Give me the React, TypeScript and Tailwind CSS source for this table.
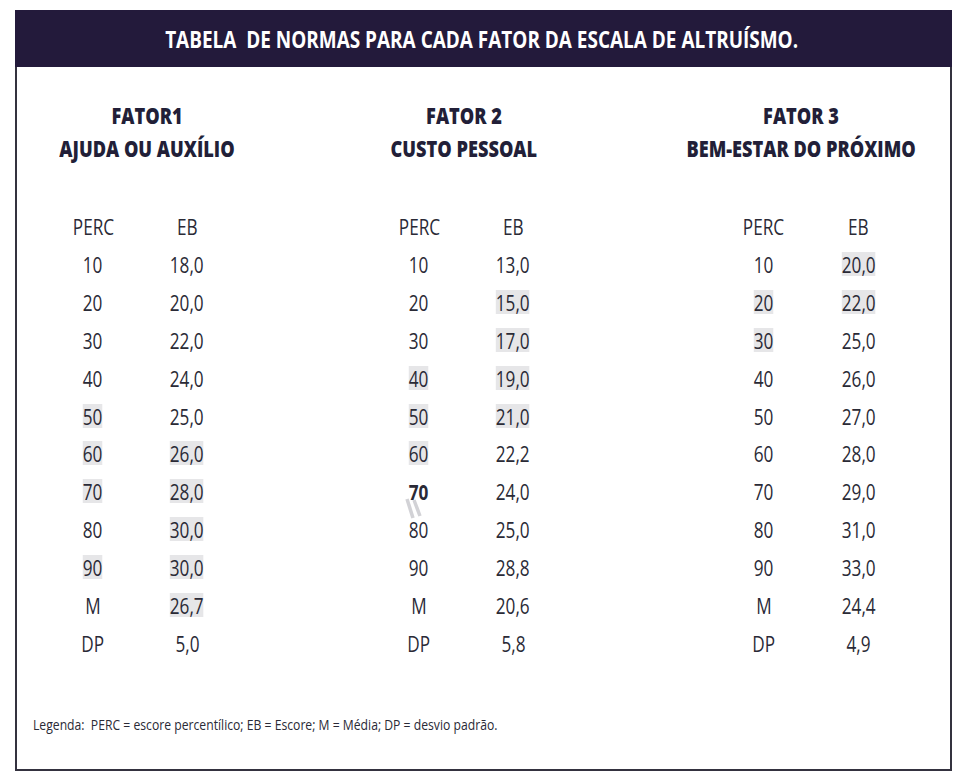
import React from "react";

type Row = { p: string; e: string; hp?: boolean; he?: boolean; bold?: boolean };

const fator1: Row[] = [
  { p: "10", e: "18,0" },
  { p: "20", e: "20,0" },
  { p: "30", e: "22,0" },
  { p: "40", e: "24,0" },
  { p: "50", e: "25,0", hp: true },
  { p: "60", e: "26,0", hp: true, he: true },
  { p: "70", e: "28,0", hp: true, he: true },
  { p: "80", e: "30,0", he: true },
  { p: "90", e: "30,0", hp: true, he: true },
  { p: "M", e: "26,7", he: true },
  { p: "DP", e: "5,0" },
];

const fator2: Row[] = [
  { p: "10", e: "13,0" },
  { p: "20", e: "15,0", he: true },
  { p: "30", e: "17,0", he: true },
  { p: "40", e: "19,0", hp: true, he: true },
  { p: "50", e: "21,0", hp: true, he: true },
  { p: "60", e: "22,2", hp: true },
  { p: "70", e: "24,0", bold: true },
  { p: "80", e: "25,0" },
  { p: "90", e: "28,8" },
  { p: "M", e: "20,6" },
  { p: "DP", e: "5,8" },
];

const fator3: Row[] = [
  { p: "10", e: "20,0", he: true },
  { p: "20", e: "22,0", hp: true, he: true },
  { p: "30", e: "25,0", hp: true },
  { p: "40", e: "26,0" },
  { p: "50", e: "27,0" },
  { p: "60", e: "28,0" },
  { p: "70", e: "29,0" },
  { p: "80", e: "31,0" },
  { p: "90", e: "33,0" },
  { p: "M", e: "24,4" },
  { p: "DP", e: "4,9" },
];

// condensed look: no narrow family installed, so squeeze horizontally
function N({ children, className = "scale-x-[0.78]" }: { children: React.ReactNode; className?: string }) {
  return <span className={`inline-block whitespace-pre ${className}`}>{children}</span>;
}

function Fator({
  num,
  name,
  rows,
  tableMl,
  colW,
}: {
  num: string;
  name: string;
  rows: Row[];
  tableMl: string;
  colW: string;
}) {
  return (
    <div className="w-[260px] flex flex-col">
      <div className="flex flex-col items-center font-extrabold text-[23px] leading-[33px] text-[#221f38]">
        <N className="scale-x-[0.79]">{num}</N>
        <N className="scale-x-[0.79]">{name}</N>
      </div>
      <div className={`mt-[43px] ${tableMl}`}>
        <div className="flex h-[37px] items-center text-[22px] text-[#2a2a36]">
          <div className={`${colW} flex justify-center`}>
            <N>PERC</N>
          </div>
          <div className={`${colW} flex justify-center`}>
            <N>EB</N>
          </div>
        </div>
        {rows.map((r) => (
          <div key={r.p} className="flex h-[37.9px] items-center text-[22px] leading-[24px] text-[#2a2a36]">
            <div className={`${colW} flex justify-center`}>
              <N className={`scale-x-[0.78] ${r.hp ? "bg-[#e6e6e8]" : ""} ${r.bold ? "font-bold" : ""}`}>{r.p}</N>
            </div>
            <div className={`${colW} flex justify-center`}>
              <N className={`scale-x-[0.78] ${r.he ? "bg-[#e6e6e8]" : ""}`}>{r.e}</N>
            </div>
          </div>
        ))}
      </div>
    </div>
  );
}

export default function App() {
  return (
    <div className="w-[963px] h-[783px] bg-white pt-[10px] pl-[15px] font-['Open_Sans',sans-serif]">
      <div className="w-[937px] h-[761px] flex flex-col border-2 border-t-0 border-[#34323f]">
        <div className="-mx-[2px] h-[57px] bg-[#231a3b] flex items-center justify-center">
          <h1 className="text-white font-bold text-[24px] ml-[-4px]">
            <N className="scale-x-[0.79]">TABELA  DE NORMAS PARA CADA FATOR DA ESCALA DE ALTRUÍSMO.</N>
          </h1>
        </div>

        <div className="relative flex pt-[32px]">
          <Fator num="FATOR1" name="AJUDA OU AUXÍLIO" rows={fator1} tableMl="ml-[29px]" colW="w-[94px]" />
          <div className="ml-[57px]">
            <Fator num="FATOR 2" name="CUSTO PESSOAL" rows={fator2} tableMl="ml-[38px]" colW="w-[94px]" />
          </div>
          <div className="ml-[77px]">
            <Fator num="FATOR 3" name="BEM-ESTAR DO PRÓXIMO" rows={fator3} tableMl="ml-[45px]" colW="w-[95px]" />
          </div>
          {/* scan mark */}
          <svg className="absolute left-[387px] top-[430px]" width="20" height="24" viewBox="0 0 20 24">
            <line x1="3" y1="2" x2="9" y2="21" stroke="#d2d2d6" strokeWidth="3.5" />
            <line x1="10" y1="3" x2="16" y2="19" stroke="#d2d2d6" strokeWidth="3.5" />
          </svg>
        </div>

        <p className="ml-[16px] mt-[53px] text-[14px] leading-[20px] text-[#2a2a36]">
          <N className="origin-left scale-x-[0.87]">
            Legenda:  PERC = escore percentílico; EB = Escore; M = Média; DP = desvio padrão.
          </N>
        </p>
      </div>
    </div>
  );
}
